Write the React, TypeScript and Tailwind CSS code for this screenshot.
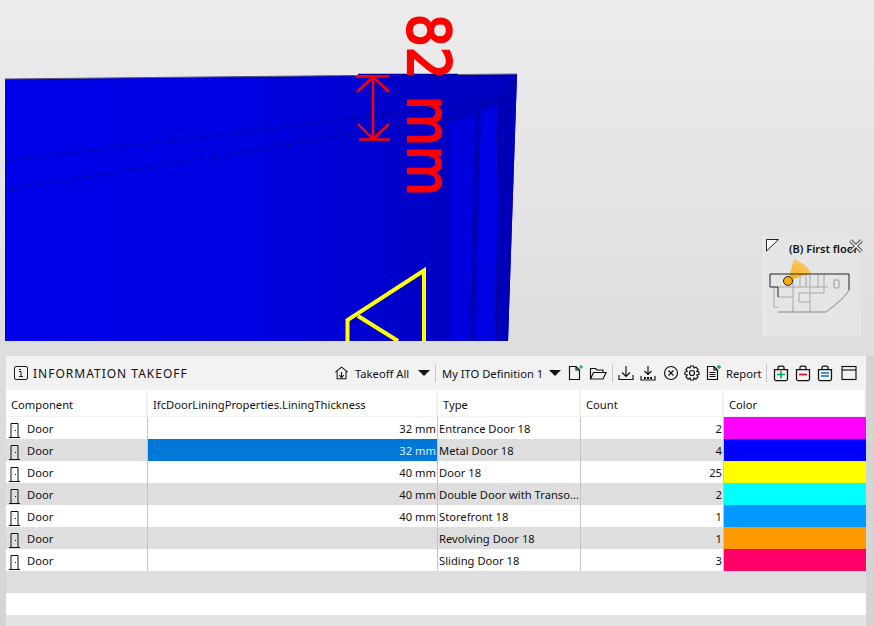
import React from "react";

const rows = [
  { lining: "32 mm", type: "Entrance Door 18", count: "2", color: "bg-[#ff00ff]" },
  { lining: "32 mm", type: "Metal Door 18", count: "4", color: "bg-[#0000ff]", selected: true },
  { lining: "40 mm", type: "Door 18", count: "25", color: "bg-[#ffff00]" },
  { lining: "40 mm", type: "Double Door with Transo...", count: "2", color: "bg-[#00ffff]" },
  { lining: "40 mm", type: "Storefront 18", count: "1", color: "bg-[#0099ff]" },
  { lining: "", type: "Revolving Door 18", count: "1", color: "bg-[#ff9900]" },
  { lining: "", type: "Sliding Door 18", count: "3", color: "bg-[#ff0066]" },
];

const cols = "grid grid-cols-[142px_290px_143px_143px_142px]";

function Door() {
  return (
    <svg width="12" height="18" viewBox="0 0 12 18" fill="none" stroke="#111111" strokeWidth="1" className="shrink-0">
      <path d="M2 17.5V3.5H9V17.5M0 17.5H11" />
      <path d="M6.5 10V11" />
    </svg>
  );
}

function Ico({ children, w = 18 }: { children: React.ReactNode; w?: number }) {
  return (
    <svg width={w} height="18" viewBox="0 0 18 18" fill="none" stroke="#111111" strokeWidth="1.15" className="shrink-0">
      {children}
    </svg>
  );
}

function Sep() {
  return <div className="w-px h-[18px] bg-[#c8c8c8] shrink-0" />;
}

function Caret() {
  return <div className="w-0 h-0 shrink-0 border-l-[6px] border-r-[6px] border-t-[6px] border-l-transparent border-r-transparent border-t-[#111111]" />;
}

function Bag({ color, kind }: { color: string; kind: "plus" | "minus" | "equal" }) {
  return (
    <Ico>
      <path d="M2.5 5.5H15.5V15Q15.5 16.5 14 16.5H4Q2.5 16.5 2.5 15ZM6 5.5V3.5Q6 2 7.5 2H10.5Q12 2 12 3.5V5.5" strokeWidth="1.25" />
      {kind === "plus" && <path d="M5 10.5H13M9 7V14.5" stroke={color} strokeWidth="1.6" />}
      {kind === "minus" && <path d="M5 10.5H13" stroke={color} strokeWidth="1.8" />}
      {kind === "equal" && <path d="M5 9H13M5 12H13" stroke={color} strokeWidth="1.5" />}
    </Ico>
  );
}

function Scene() {
  return (
    <svg width="874" height="341" viewBox="0 0 874 341" className="absolute left-0 top-0">
      <defs>
        <linearGradient id="blue" x1="0" y1="0" x2="1" y2="0">
          <stop offset="0" stopColor="#0000ea" />
          <stop offset="0.5" stopColor="#0000e0" />
          <stop offset="0.85" stopColor="#0000c4" />
          <stop offset="1" stopColor="#0000c0" />
        </linearGradient>
      </defs>
      <polygon points="5,79 517,74 508,341 5,341" fill="url(#blue)" />
      <path d="M5 79L355 75.5" stroke="#555577" strokeWidth="1" />
      <path d="M358 74.5H458" stroke="#0000a0" strokeWidth="1.5" />
      <path d="M458 74.5L517 74" stroke="#666688" strokeWidth="1" />
      <polygon points="450,122 478,115 472,341 450,341" fill="#0000de" />
      <polygon points="478,114 500,104 497,341 472,341" fill="#0000e2" />
      <polygon points="474,118 481,112 476,341 470,341" fill="#0000c4" />
      <polygon points="500,102 517,75 508,341 497,341" fill="#0000b8" />
      <path d="M503 100L5 161M478 114L5 190" stroke="#00007a" strokeWidth="0.8" strokeDasharray="5 2" />
      <path d="M503 100L517 75M499 102L496 341M478 114L471 341" stroke="#00006e" strokeWidth="0.8" />
      <path d="M356 76.5H389M373 77V139M359 139.5H390M373 77L357 92M373 77L389 92M373 139L358 124M373 139L389 124" stroke="#ff0000" strokeWidth="2.4" fill="none" />
      <text transform="translate(408,14) rotate(90) scale(0.97,1.12)" fontFamily="'DejaVu Sans', sans-serif" fontSize="53" fill="#ff0000" stroke="#ff0000" strokeWidth="2">82 mm</text>
      <path d="M347.5 341V320L424 270.5V341" stroke="#ffff00" strokeWidth="4" fill="none" />
      <path d="M358 316L398 341" stroke="#ffff00" strokeWidth="4" fill="none" />
    </svg>
  );
}

function MiniMap() {
  return (
    <div className="absolute left-[763px] top-[237px] w-[98px] h-[99px] bg-[#e5e5e5] border-l border-[#eeeeee]">
      <svg width="98" height="99" viewBox="0 0 98 99" fill="none" className="absolute left-0 top-0">
        <defs>
          <linearGradient id="fan" x1="0" y1="1" x2="0.4" y2="0">
            <stop offset="0" stopColor="#ffb000" />
            <stop offset="1" stopColor="#f5c870" />
          </linearGradient>
        </defs>
        <path d="M24 44L30 22Q42 26 47 36Z" fill="url(#fan)" />
        <path d="M2.5 2.5H14.5L2.5 14Z" fill="#ffffff" stroke="#222222" strokeWidth="1" />
        <path d="M14 50H64M10 50V70H14M29 37V75M46 37V75M35 56H60M35 65H46M35 56V65M36 37V50M42 37V50M54 37V50M60 37V50M60 50V56M14 60H29" stroke="#a8a8a8" strokeWidth="1" />
        <path d="M85 53Q80 62 62 75H14" stroke="#888888" strokeWidth="1" />
        <path d="M6 37H85V53M6 37V50H14V60" stroke="#222222" strokeWidth="1" />
        <rect x="70" y="43" width="5" height="8" rx="1" stroke="#999999" />
        <circle cx="24" cy="44" r="4.5" fill="#ffaa00" stroke="#222222" strokeWidth="1" />
      </svg>
      <div className="absolute left-[25px] top-[4px] text-[11px] leading-[15px] font-semibold whitespace-nowrap text-[#111111]">
        (B) First floor
      </div>
      <svg width="16" height="16" viewBox="0 0 16 16" className="absolute left-[84px] top-[1px]" fill="none">
        <path d="M2.5 2.5L13.5 13.5M13.5 2.5L2.5 13.5" stroke="#444444" strokeWidth="3.5" />
        <path d="M2.5 2.5L13.5 13.5M13.5 2.5L2.5 13.5" stroke="#f4f4f4" strokeWidth="1.6" />
      </svg>
    </div>
  );
}

function Toolbar() {
  return (
    <div className="h-[34px] bg-[#f2f2f2] flex items-center text-[11.2px] text-[#111111]">
      <div className="ml-[8px] flex items-center gap-[5px]">
        <svg width="14" height="14" viewBox="0 0 14 14" fill="none" stroke="#1a1a1a" className="shrink-0">
          <rect x="0.5" y="0.5" width="13" height="13" rx="1.5" />
          <path d="M5 3.5H7M7 5.5V10.5M5 10.5H9M5 5.5H7" />
        </svg>
        <span className="text-[12px] tracking-[1px] translate-y-[1px]">INFORMATION TAKEOFF</span>
      </div>
      <div className="ml-auto mr-[8px] flex items-center">
        <Ico w={16}>
          <path d="M1.5 8L8.5 2.5L15.5 8M3.5 7V15.5H13.5V7M8.5 8V14M6 11.5L8.5 14L11 11.5" />
        </Ico>
        <span className="ml-[5px] w-[57px] whitespace-nowrap translate-y-[1px]">Takeoff All</span>
        <div className="ml-[6px]"><Caret /></div>
        <div className="ml-[5px]"><Sep /></div>
        <span className="ml-[6px] w-[101px] whitespace-nowrap translate-y-[1px]">My ITO Definition 1</span>
        <div className="ml-[6px]"><Caret /></div>
        <div className="ml-[5px]">
          <Ico>
            <path d="M3.5 2.5H10L13.5 6V15.5H3.5ZM10 2.5V6H13.5" />
            <path d="M15 1V5M13 3H17" stroke="#00b050" />
          </Ico>
        </div>
        <div className="ml-[5px]">
          <Ico>
            <path d="M1.5 15V4.5H6.5L8 6H14V8.5M1.5 15L4.5 8.5H17L14 15Z" />
          </Ico>
        </div>
        <div className="ml-[5px]"><Sep /></div>
        <div className="ml-[4px]">
          <Ico>
            <path d="M9 2V12M5 8.5L9 12.5L13 8.5M2 11V15.5H16V11" />
          </Ico>
        </div>
        <div className="ml-[4px]">
          <Ico>
            <path d="M9 2V10M5.5 7L9 10.5L12.5 7M2 12V16H16V12" />
            <path d="M5 14H13" strokeWidth="2" strokeDasharray="2 1" />
          </Ico>
        </div>
        <div className="ml-[5px]">
          <Ico>
            <circle cx="9" cy="9" r="6.5" />
            <path d="M6.5 6.5L11.5 11.5M11.5 6.5L6.5 11.5" />
          </Ico>
        </div>
        <div className="ml-[3px]">
          <Ico>
            <circle cx="9" cy="9" r="2.5" />
            <path d="M7.5 2H10.5L11 4L13 3.2L15.2 5.6L13.8 7.4L16 8V10.5L13.8 11L15 13L12.8 15.2L11 14L10.5 16H7.5L7 14L5.2 15.2L3 13L4.2 11L2 10.5V8L4.2 7.4L2.8 5.6L5 3.2L7 4Z" />
          </Ico>
        </div>
        <div className="ml-[3px]">
          <Ico>
            <path d="M3.5 2.5H10L13.5 6V15.5H3.5ZM10 2.5V6H13.5M5.5 8.5H11.5M5.5 10.5H11.5M5.5 12.5H11.5" />
            <path d="M15 1V5M13 3H17" stroke="#00b050" strokeWidth="1.4" />
          </Ico>
        </div>
        <span className="ml-[4px] w-[36px] whitespace-nowrap translate-y-[1px]">Report</span>
        <div className="ml-[4px]"><Sep /></div>
        <div className="ml-[5px]"><Bag color="#00b050" kind="plus" /></div>
        <div className="ml-[4px]"><Bag color="#e81123" kind="minus" /></div>
        <div className="ml-[4px]"><Bag color="#0078d7" kind="equal" /></div>
        <div className="ml-[6px]">
          <Ico>
            <rect x="2" y="2.5" width="14" height="13" />
            <path d="M2 6H16" />
          </Ico>
        </div>
      </div>
    </div>
  );
}

export default function App() {
  return (
    <div className="w-[874px] h-[626px] overflow-hidden bg-[#dedede] font-['Noto_Sans','Open_Sans',sans-serif] text-[11.2px] text-[#111111]">
      <div className="relative h-[341px] bg-gradient-to-b from-[#ececec] to-[#dedede]">
        <Scene />
        <MiniMap />
      </div>
      <div className="h-[15px]" />
      <div className="flex h-[270px]">
        <div className="w-[6px] bg-gradient-to-b from-[#dedede] to-[#d4d4d4]" />
        <div className="w-[860px] flex flex-col bg-white">
          <Toolbar />
          <div className={`${cols} h-[27px] border-b border-[#f0f0f0] bg-white`}>
            {["Component", "IfcDoorLiningProperties.LiningThickness", "Type", "Count", "Color"].map((h) => (
              <div key={h} className="border-r-2 border-[#f0f0f0] pl-[5px] leading-[29px] whitespace-nowrap">{h}</div>
            ))}
          </div>
          {rows.map((r, i) => (
            <div key={i} className={`${cols} h-[22px] leading-[23px] ${i % 2 ? "bg-[#dedede]" : "bg-white"}`}>
              <div className="flex items-center gap-[6px] pl-[3px] border-r border-[#c4c4c4]">
                <Door />
                <span>Door</span>
              </div>
              <div className={`text-right pr-[1px] border-r border-[#c4c4c4] ${r.selected ? "bg-[#0078d7] text-[#dfeeff]" : ""}`}>{r.lining}</div>
              <div className="pl-[1px] border-r border-[#c4c4c4] whitespace-nowrap">{r.type}</div>
              <div className="text-right pr-[1px] border-r border-[#c4c4c4]">{r.count}</div>
              <div className={r.color} />
            </div>
          ))}
          <div className="h-[22px] bg-[#dedede]" />
          <div className="h-[22px] bg-white" />
          <div className="h-[11px] bg-[#e3e3e3]" />
        </div>
        <div className="w-[8px] bg-[#d4d4d4]" />
      </div>
    </div>
  );
}
